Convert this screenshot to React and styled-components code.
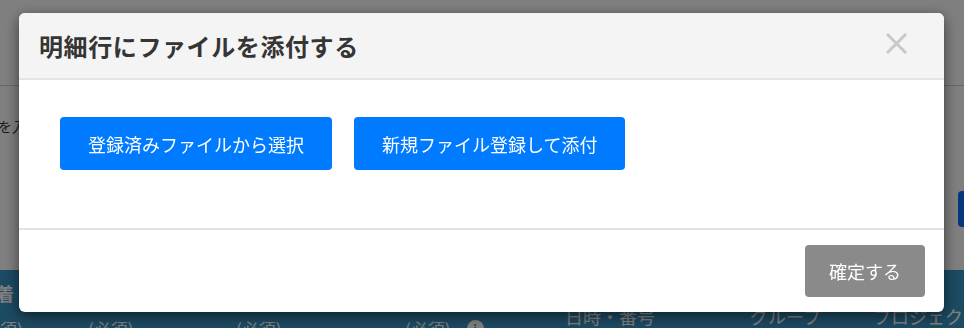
import styled, { createGlobalStyle } from 'styled-components'

const GlobalStyle = createGlobalStyle`
  body {
    margin: 0;
    font-family: 'Noto Sans CJK JP', 'Noto Sans', sans-serif;
  }
`

const headCols = [
  { top: '着', sub: '須)' },
  { top: '', sub: '(必須)' },
  { top: '', sub: '(必須)' },
  { top: '', sub: '(必須)', info: true },
  { top: '', main: '日時・番号' },
  { top: '', main: 'グループ' },
  { top: '', main: 'プロジェクト' }
]

export default function App() {
  return (
    <>
      <GlobalStyle />
      <Page>
        <TopBar />
        <Content>
          <Hint>を入</Hint>
          <ActionRow>
            <PageButton>追加</PageButton>
          </ActionRow>
        </Content>
        <TableHead>
          {headCols.map((c, i) => (
            <HeadCell key={i}>
              <HeadTop>{c.top}</HeadTop>
              {c.main && <HeadMain>{c.main}</HeadMain>}
              {c.sub && (
                <HeadSub>
                  {c.sub}
                  {c.info && <InfoDot>i</InfoDot>}
                </HeadSub>
              )}
            </HeadCell>
          ))}
        </TableHead>
      </Page>

      <Overlay>
        <Modal>
          <Header>
            <Title>明細行にファイルを添付する</Title>
            <CloseButton aria-label="閉じる">
              <svg width="21" height="21" viewBox="0 0 21 21">
                <path
                  d="M2 2 L19 19 M19 2 L2 19"
                  stroke="#c8c8c8"
                  strokeWidth="3"
                  strokeLinecap="square"
                />
              </svg>
            </CloseButton>
          </Header>
          <Body>
            <PrimaryButton>登録済みファイルから選択</PrimaryButton>
            <PrimaryButton>新規ファイル登録して添付</PrimaryButton>
          </Body>
          <Footer>
            <ConfirmButton>確定する</ConfirmButton>
          </Footer>
        </Modal>
      </Overlay>
    </>
  )
}

const Page = styled.div`
  width: 964px;
  height: 328px;
  overflow: hidden;
  background: #fff;
  display: flex;
  flex-direction: column;
`

const TopBar = styled.div`
  height: 85px;
  border-bottom: 1px solid #cfcfcf;
  flex-shrink: 0;
`

const Content = styled.div`
  height: 184px;
  display: flex;
  flex-direction: column;
  flex-shrink: 0;
`

const Hint = styled.div`
  margin-top: 30px;
  font-size: 14px;
  color: #333;
  margin-left: -2px;
`

const ActionRow = styled.div`
  display: flex;
  justify-content: flex-end;
  margin-top: 55px;
  margin-right: -60px;
`

const PageButton = styled.div`
  width: 66px;
  height: 36px;
  background: #0d6efd;
  border-radius: 4px;
  color: #fff;
  display: flex;
  align-items: center;
  justify-content: center;
`

const TableHead = styled.div`
  flex: 1;
  background: #3894c4;
  display: grid;
  grid-template-columns: 88px 148px 169px 160px 185px 123px 1fr;
  margin-left: -24px;
  padding-left: 24px;
  color: #fff;
  overflow: hidden;
`

const HeadCell = styled.div`
  display: flex;
  flex-direction: column;
  white-space: nowrap;
`

const HeadTop = styled.div`
  height: 36px;
  font-size: 18px;
  font-weight: 700;
  padding-top: 10px;
  box-sizing: border-box;
  margin-left: -4px;
`

const HeadMain = styled.div`
  font-size: 18px;
  margin-top: -3px;
`

const HeadSub = styled.div`
  font-size: 17px;
  margin-top: 10px;
  display: flex;
  align-items: center;
  gap: 16px;
`

const InfoDot = styled.span`
  width: 17px;
  height: 17px;
  border-radius: 50%;
  background: #fff;
  color: #3894c4;
  font-size: 12px;
  font-weight: 700;
  display: inline-flex;
  align-items: center;
  justify-content: center;
`

const Overlay = styled.div`
  position: fixed;
  inset: 0;
  background: rgba(0, 0, 0, 0.5);
  display: flex;
  justify-content: center;
  align-items: flex-start;
  padding-top: 13px;
`

const Modal = styled.div`
  width: 925px;
  margin-left: -1px;
  background: #fff;
  border-radius: 6px;
  box-shadow: 0 4px 14px rgba(0, 0, 0, 0.55);
  display: flex;
  flex-direction: column;
`

const Header = styled.div`
  height: 65px;
  padding: 0 37px 0 20px;
  background: #f4f4f4;
  border-bottom: 2px solid #e4e4e4;
  border-radius: 6px 6px 0 0;
  display: flex;
  align-items: center;
  justify-content: space-between;
`

const Title = styled.h4`
  margin: 0;
  font-size: 24px;
  font-weight: 700;
  letter-spacing: 0.6px;
  color: #353535;
`

const CloseButton = styled.button`
  border: none;
  background: none;
  padding: 0;
  margin-bottom: 5px;
  display: flex;
  cursor: pointer;
`

const Body = styled.div`
  height: 148px;
  box-sizing: border-box;
  padding: 37px 41px 0;
  display: flex;
  align-items: flex-start;
  gap: 22px;
`

const PrimaryButton = styled.button`
  height: 53px;
  padding: 0 28px;
  border: none;
  border-radius: 4px;
  background: #007bff;
  color: #fff;
  font-family: inherit;
  font-size: 18px;
  cursor: pointer;
`

const Footer = styled.div`
  border-top: 2px solid #e4e4e4;
  padding: 15px 19px;
  display: flex;
  justify-content: flex-end;
`

const ConfirmButton = styled.button`
  height: 52px;
  padding: 0 24px;
  border: none;
  border-radius: 4px;
  background: #8a8a8a;
  color: #fff;
  font-family: inherit;
  font-size: 18px;
  cursor: pointer;
`
